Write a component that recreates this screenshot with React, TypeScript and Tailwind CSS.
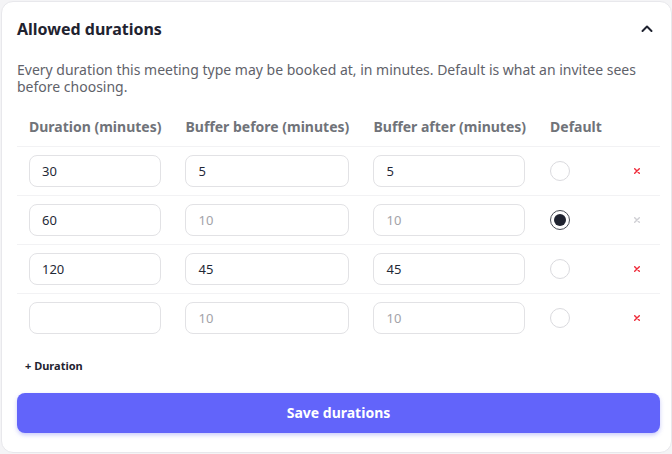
import React from "react";

type Row = { duration: string; before: string; after: string; isDefault: boolean; removable: boolean };

const rows: Row[] = [
  { duration: "30", before: "5", after: "5", isDefault: false, removable: true },
  { duration: "60", before: "", after: "", isDefault: true, removable: false },
  { duration: "120", before: "45", after: "45", isDefault: false, removable: true },
  { duration: "", before: "", after: "", isDefault: false, removable: true },
];

function Field({ value, width, placeholder }: { value: string; width: string; placeholder?: string }) {
  return (
    <input
      readOnly
      value={value}
      placeholder={placeholder}
      className={`${width} h-8 rounded-lg border border-[#e2e2e5] bg-white px-3 text-[13px] text-[#1f2937] placeholder:text-[#a3a3a8] outline-none`}
    />
  );
}

function Radio({ on }: { on: boolean }) {
  if (on) {
    return (
      <div className="flex h-5 w-5 items-center justify-center rounded-full border-[1.5px] border-[#4b4f58] bg-white">
        <div className="h-3 w-3 rounded-full bg-[#1f2330]" />
      </div>
    );
  }
  return <div className="h-5 w-5 rounded-full border border-[#dadade] bg-white" />;
}

function XMark({ active }: { active: boolean }) {
  return (
    <svg width="6" height="6" viewBox="0 0 6 6" className="block">
      <path d="M0.7 0.7 L5.3 5.3 M5.3 0.7 L0.7 5.3" stroke={active ? "#ef2b3a" : "#cfcfd4"} strokeWidth="1.4" strokeLinecap="round" />
    </svg>
  );
}

export default function App() {
  return (
    <div className="min-h-[454px] w-[672px] bg-[#f4f4f6] pl-px pt-px" style={{ fontFamily: '"Noto Sans", "Open Sans", sans-serif' }}>
      <div className="flex h-[452px] w-[671px] flex-col rounded-xl border border-[#e8e8ec] bg-white pl-[15px] pr-[10px] pt-[15px]">
        <div className="flex h-6 items-center justify-between">
          <h2 className="text-base font-bold text-[#1f2330]">Allowed durations</h2>
          <svg width="14" height="14" viewBox="0 0 14 14" className="mr-[7px]">
            <path d="M2.5 9 L7 4.5 L11.5 9" fill="none" stroke="#1f2330" strokeWidth="2" strokeLinecap="round" strokeLinejoin="round" />
          </svg>
        </div>
        <p className="mt-5 text-sm leading-[17px] text-[#5f626a]">
          Every duration this meeting type may be booked at, in minutes. Default is what an invitee sees before choosing.
        </p>
        <table className="mt-[10px] w-[643px] border-collapse text-left">
          <thead>
            <tr className="border-b border-[#f2f2f4]">
              <th className="w-[156px] whitespace-nowrap px-3 pb-[9px] pt-3 text-sm font-bold text-[#707379]">Duration (minutes)</th>
              <th className="w-[188px] whitespace-nowrap px-3 pb-[9px] pt-3 text-sm font-bold text-[#707379]">Buffer before (minutes)</th>
              <th className="w-[176px] whitespace-nowrap px-3 pb-[9px] pt-3 text-sm font-bold text-[#707379]">Buffer after (minutes)</th>
              <th className="w-[75px] whitespace-nowrap px-3 pb-[9px] pt-3 text-sm font-bold text-[#707379]">Default</th>
              <th className="w-[48px]" />
            </tr>
          </thead>
          <tbody>
            {rows.map((r, i) => (
              <tr key={i} className={i < rows.length - 1 ? "border-b border-[#f2f2f4]" : ""}>
                <td className="px-3 py-2">
                  <Field value={r.duration} width="w-[132px]" />
                </td>
                <td className="px-3 py-2">
                  <Field value={r.before} width="w-[164px]" placeholder="10" />
                </td>
                <td className="px-3 py-2">
                  <Field value={r.after} width="w-[152px]" placeholder="10" />
                </td>
                <td className="px-3 py-2">
                  <Radio on={r.isDefault} />
                </td>
                <td className="py-2">
                  <div className="flex justify-center">
                    <XMark active={r.removable} />
                  </div>
                </td>
              </tr>
            ))}
          </tbody>
        </table>
        <div className="mt-3 flex h-6 items-center">
          <button className="px-2 text-[11px] font-bold text-[#1f2330]">+ Duration</button>
        </div>
        <button className="mt-[15px] h-10 w-[643px] rounded-lg bg-[#6264fa] text-sm font-bold text-white shadow-[0_2px_4px_rgba(99,102,241,0.35)]">
          Save durations
        </button>
      </div>
    </div>
  );
}
